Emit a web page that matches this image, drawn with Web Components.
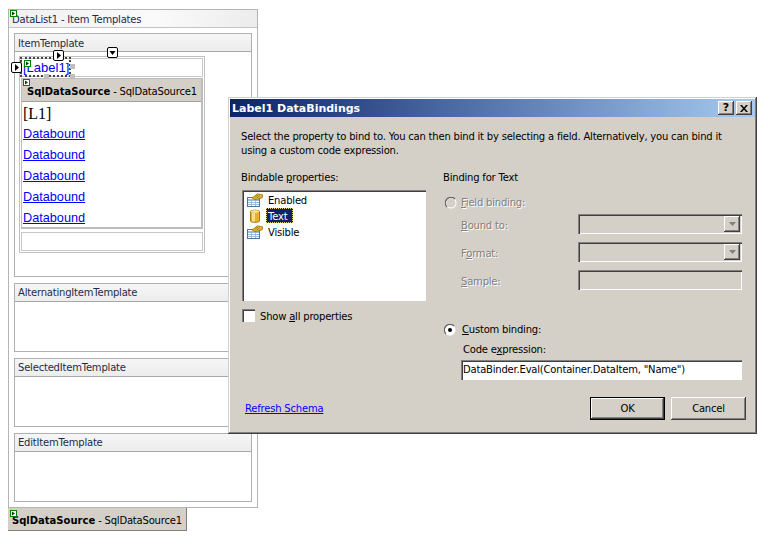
<!DOCTYPE html>
<html>
<head>
<meta charset="utf-8">
<title>Label1 DataBindings</title>
<style>
  html, body { margin: 0; background: #fff; }
  body {
    width: 783px;
    height: 555px;
    overflow: hidden;
    position: relative;
    --ui-font: "DejaVu Sans", sans-serif;
    font: 10px/14px var(--ui-font);
    letter-spacing: -.2px;
  }
  u { text-decoration: underline; }
</style>
</head>
<body>
<designer-frame label="DataList1 - Item Templates">
  <template-panel label="ItemTemplate" size="244" style="--head-line:20px">
    <item-table></item-table>
    <smart-tag dir="right" style="left:38px;top:16px"></smart-tag>
    <smart-tag dir="down" style="left:92px;top:13px"></smart-tag>
    <smart-tag dir="right" style="left:-4px;top:28px"></smart-tag>
  </template-panel>
  <template-panel label="AlternatingItemTemplate" size="69"></template-panel>
  <template-panel label="SelectedItemTemplate" size="69"></template-panel>
  <template-panel label="EditItemTemplate" size="69"></template-panel>
</designer-frame>
<source-tag></source-tag>

<bindings-dialog label="Label1 DataBindings"></bindings-dialog>

<script>
/**
 * Small glyph shown at the corner of designer controls
 */
class GreenTag extends HTMLElement {
  constructor() {
    super();
    const shadowRoot = this.attachShadow({ mode: 'open' });
    shadowRoot.innerHTML = `
      <style>
        :host { display: block; position: absolute; width: 7px; height: 7px; line-height: 0; }
      </style>
      <svg width="7" height="7" viewBox="0 0 7 7">
        <rect x=".5" y=".5" width="6" height="6" fill="#fff" stroke="#008000"/>
        <path d="M2 1.500v4l3-2z" fill="#004000"/>
      </svg>
    `;
  }
}

/**
 * Black outlined arrow button over the design surface
 */
class SmartTag extends HTMLElement {
  constructor() {
    super();
    const shadowRoot = this.attachShadow({ mode: 'open' });
    const arrow = this.getAttribute('dir') === 'down' ? 'M2.500 4h6l-3 4z' : 'M4 2v7l4-3.500z';
    shadowRoot.innerHTML = `
      <style>
        :host { display: block; position: absolute; width: 11px; height: 11px; line-height: 0; z-index: 3; }
      </style>
      <svg width="11" height="11" viewBox="0 0 11 11">
        <rect x=".5" y=".5" width="10" height="10" rx="1.500" fill="#fff" stroke="#000"/>
        <path d="${arrow}" fill="#000"/>
      </svg>
    `;
  }
}

/**
 * Outer designer box with the title strip
 */
class DesignerFrame extends HTMLElement {
  constructor() {
    super();
    const shadowRoot = this.attachShadow({ mode: 'open' });
    shadowRoot.innerHTML = `
      <style>
        :host {
          display: block;
          position: relative;
          box-sizing: border-box;
          width: 250px;
          height: 499px;
          margin: 9px 0 0 8px;
          border: 1px solid #b4b4b4;
          color: #1d2b4c;
        }
        .title {
          height: 17px;
          line-height: 20px;
          padding-left: 3px;
          border-bottom: 1px solid #c4c4c4;
          background: linear-gradient(90deg, #f0f0f0, #fafafa 60%, #ececec);
        }
        .body { display: flex; flex-direction: column; gap: 6px; padding: 5px 5px 0; }
        green-tag { left: 1px; top: 0; }
      </style>
      <green-tag></green-tag>
      <div class="title">${this.getAttribute('label')}</div>
      <div class="body"><slot></slot></div>
    `;
  }
}

/**
 * One template section of the DataList designer
 */
class TemplatePanel extends HTMLElement {
  constructor() {
    super();
    const shadowRoot = this.attachShadow({ mode: 'open' });
    shadowRoot.innerHTML = `
      <style>
        :host {
          display: block;
          position: relative;
          box-sizing: border-box;
          height: ${this.getAttribute('size')}px;
          border: 1px solid #b0b0b0;
          background: #fff;
        }
        .head {
          height: 17px;
          line-height: var(--head-line, 18px);
          padding-left: 3px;
          border-bottom: 1px solid #a8a8a8;
          background: linear-gradient(180deg, #f6f6f6, #ececec);
        }
        .content { padding: 4px 4px 0; }
      </style>
      <div class="head">${this.getAttribute('label')}</div>
      <div class="content"><slot></slot></div>
    `;
  }
}

/**
 * Rendered item table: label row, data source with sample rows, empty row
 */
class ItemTable extends HTMLElement {
  constructor() {
    super();
    const shadowRoot = this.attachShadow({ mode: 'open' });
    const rows = ['Databound', 'Databound', 'Databound', 'Databound', 'Databound']
      .map(text => `<a>${text}</a>`).join('');
    shadowRoot.innerHTML = `
      <style>
        :host {
          display: flex;
          flex-direction: column;
          box-sizing: border-box;
          width: 186px;
          height: 197px;
          padding: 1px;
          border: 1px solid #c0c0c0;
          position: relative;
        }
        .cell { border: 1px solid #c8c8c8; }
        .label {
          height: 17px;
          font: 13px/18px "Liberation Sans", sans-serif;
          letter-spacing: 0;
          color: #0000ee;
          padding-left: 1px;
          position: relative;
        }
        .select {
          position: absolute;
          left: -2px;
          top: -2px;
          width: 47px;
          height: 16px;
          border: 2px dotted #444;
        }
        .grip { position: absolute; width: 5px; height: 5px; background: #c0c0c0; }
        .source {
          margin-top: 1px;
          height: 148px;
          border: 1px solid #bcbcbc;
          border-width: 1px 2px 2px 1px;
          position: relative;
        }
        .source-head {
          height: 22px;
          line-height: 26px;
          padding-left: 5px;
          background: #d4d0c8;
          border-bottom: 1px solid #a0a0a0;
          color: #000;
          white-space: nowrap;
        }
        .source-head b { letter-spacing: 0; }
        .l1 { height: 21px; font: 16px/21px "Liberation Serif", serif; letter-spacing: 0; color: #000; padding: 0 1px; margin-top: 1px; }
        a {
          display: block;
          width: max-content;
          margin-left: 1px;
          height: 21px;
          font: 12.700px/21px "Liberation Sans", sans-serif;
          letter-spacing: 0;
          color: #0000ff;
          text-decoration: underline;
        }
        .empty { margin-top: 3px; height: 19px; }
      </style>
      <div class="cell label">[Label1]
        <div class="select"></div>
        <div class="grip" style="left:48px;top:5px"></div>
        <div class="grip" style="left:22px;top:15px"></div>
        <div class="grip" style="left:48px;top:15px"></div>
        <green-tag style="left:2px;top:1px"></green-tag>
      </div>
      <div class="source">
        <green-tag style="left:1px;top:0"></green-tag>
        <div class="source-head"><b>SqlDataSource</b> - SqlDataSource1</div>
        <div class="l1">[L1]</div>
        ${rows}
      </div>
      <div class="cell empty"></div>
    `;
  }
}

/**
 * Grey non visual control strip below the designer
 */
class SourceTag extends HTMLElement {
  constructor() {
    super();
    const shadowRoot = this.attachShadow({ mode: 'open' });
    shadowRoot.innerHTML = `
      <style>
        :host {
          display: block;
          position: relative;
          box-sizing: border-box;
          width: 179px;
          height: 23px;
          margin-left: 8px;
          padding-left: 4px;
          line-height: 26px;
          white-space: nowrap;
          background: #d4d0c8;
          border-right: 1px solid #808080;
          border-bottom: 1px solid #808080;
          color: #000;
        }
        b { letter-spacing: 0; }
        green-tag { left: 2px; top: 2px; }
      </style>
      <green-tag></green-tag>
      <b>SqlDataSource</b> - SqlDataSource1
    `;
  }
}

/**
 * Classic raised push button
 */
class PushButton extends HTMLElement {
  constructor() {
    super();
    const shadowRoot = this.attachShadow({ mode: 'open' });
    shadowRoot.innerHTML = `
      <style>
        :host {
          display: flex;
          align-items: center;
          justify-content: center;
          box-sizing: border-box;
          width: 75px;
          height: 23px;
          background: #d4d0c8;
          box-shadow: inset -1px -1px 0 #404040, inset 1px 1px 0 #fff, inset -2px -2px 0 #808080;
        }
        :host([default]) {
          outline: 1px solid #000;
          outline-offset: -1px;
          box-shadow: inset -2px -2px 0 #404040, inset 2px 2px 0 #fff, inset -3px -3px 0 #808080;
        }
      </style>
      <slot></slot>
    `;
  }
}

/**
 * Sunken field, optionally with a drop arrow; disabled ones stay grey
 */
class SunkenField extends HTMLElement {
  constructor() {
    super();
    const shadowRoot = this.attachShadow({ mode: 'open' });
    const drop = this.hasAttribute('drop')
      ? `<div class="drop"><svg width="7" height="4" viewBox="0 0 7 4"><path d="M0 0h7L3.500 4z" fill="#808080"/></svg></div>`
      : '';
    shadowRoot.innerHTML = `
      <style>
        :host {
          display: flex;
          align-items: center;
          justify-content: flex-end;
          box-sizing: border-box;
          height: 20px;
          padding: 2px;
          background: #d4d0c8;
          box-shadow: inset 1px 1px 0 #808080, inset 2px 2px 0 #404040, inset -1px -1px 0 #fff;
        }
        .drop {
          display: flex;
          align-items: center;
          justify-content: center;
          width: 16px;
          height: 16px;
          background: #d4d0c8;
          box-shadow: inset -1px -1px 0 #404040, inset 1px 1px 0 #fff, inset -2px -2px 0 #808080;
        }
      </style>
      ${drop}<slot></slot>
    `;
  }
}

/**
 * Round option mark
 */
class RadioMark extends HTMLElement {
  constructor() {
    super();
    const shadowRoot = this.attachShadow({ mode: 'open' });
    const checked = this.hasAttribute('checked');
    shadowRoot.innerHTML = `
      <style>
        :host { display: block; width: 12px; height: 12px; line-height: 0; flex: none; }
      </style>
      <svg width="12" height="12" viewBox="0 0 12 12">
        <circle cx="6" cy="6" r="5.500" fill="#fff"/>
        <circle cx="6" cy="6" r="4.500" fill="${checked ? '#fff' : '#d4d0c8'}"/>
        <path d="M10 2A5.500 5.500 0 0 0 2 10" fill="none" stroke="#606060" stroke-width="1.200"/>
        ${checked ? '<circle cx="6" cy="6" r="2" fill="#000"/>' : ''}
      </svg>
    `;
  }
}

/**
 * Row of the bindable properties list with its icon
 */
class PropertyRow extends HTMLElement {
  constructor() {
    super();
    const shadowRoot = this.attachShadow({ mode: 'open' });
    const icon = this.getAttribute('icon') === 'bound'
      ? `<svg width="16" height="16" viewBox="0 0 16 16">
           <path d="M3.500 2.500C3.500 .8 12.500 .8 12.500 2.500V12C12.500 13.800 3.500 13.800 3.500 12z" fill="#e8b030" stroke="#a87c18"/>
           <ellipse cx="8" cy="2.500" rx="4" ry="1.200" fill="#f8e8a0"/>
           <rect x="5" y="4" width="3" height="8.500" fill="#f8dc80"/>
         </svg>`
      : `<svg width="16" height="16" viewBox="0 0 16 16">
           <rect x=".5" y="4.500" width="12" height="9" fill="#fff" stroke="#4c74a8"/>
           <path d="M1 7h11" stroke="#4c74a8"/>
           <path d="M1 9.500h11M1 11.500h11M4.500 7v6M8.500 7v6" stroke="#a0b8d8"/>
           <path d="M5 5L10.500 .8 16 2l-1 3-4 1-3 .5z" fill="#e8b830" stroke="#806418" stroke-width=".7"/>
           <path d="M8 4.500L11 2M10 5l3-2.500" stroke="#806418" stroke-width=".7"/>
         </svg>`;
    shadowRoot.innerHTML = `
      <style>
        :host { display: flex; align-items: flex-start; height: 16px; gap: 3px; color: #000; }
        .icon { width: 16px; height: 16px; line-height: 0; flex: none; }
        .text { margin-top: -1px; padding: 0 6px 0 2px; line-height: 17px; height: 15px; }
        :host([selected]) .text { background: #0a246a; color: #fff; outline: 1px dotted #e8d080; outline-offset: -1px; }
      </style>
      <div class="icon">${icon}</div>
      <div class="text"><slot></slot></div>
    `;
  }
}

/**
 * The DataBindings window floating over the designer
 */
class BindingsDialog extends HTMLElement {
  constructor() {
    super();
    const shadowRoot = this.attachShadow({ mode: 'open' });
    shadowRoot.innerHTML = `
      <style>
        :host {
          display: block;
          position: absolute;
          left: 228px;
          top: 97px;
          width: 529px;
          height: 337px;
          box-sizing: border-box;
          padding: 2px;
          background: #d4d0c8;
          box-shadow: inset -1px -1px 0 #404040, inset 1px 1px 0 #d4d0c8, inset -2px -2px 0 #808080, inset 2px 2px 0 #fff;
          color: #000;
          z-index: 5;
        }
        .titlebar {
          display: flex;
          align-items: center;
          justify-content: space-between;
          height: 18px;
          padding: 0 3px 0 2px;
          background: linear-gradient(90deg, #0a246a, #a6caf0);
          color: #fff;
          font-weight: bold;
          font-size: 11px;
          letter-spacing: 0;
        }
        .titlebar > span { padding-top: 2px; }
        .caps { display: flex; gap: 2px; }
        .cap {
          width: 16px;
          height: 14px;
          display: flex;
          align-items: center;
          justify-content: center;
          background: #d4d0c8;
          box-shadow: inset -1px -1px 0 #404040, inset 1px 1px 0 #fff, inset -2px -2px 0 #808080;
          color: #000;
          line-height: 14px;
        }
        .cap svg { display: block; }
        .main { padding: 13px 9px 0 11px; }
        .intro { width: 490px; white-space: nowrap; }
        .columns { display: grid; grid-template-columns: 202px 299px; margin-top: 13px; }
        .list {
          box-sizing: border-box;
          width: 184px;
          height: 111px;
          margin: 5px 0 0 1px;
          padding: 3px 2px 0 5px;
          background: #fff;
          box-shadow: inset 1px 1px 0 #808080, inset 2px 2px 0 #404040, inset -1px -1px 0 #fff;
        }
        .check { display: flex; align-items: flex-start; gap: 5px; margin: 8px 0 0 1px; }
        .check span { margin-top: 1px; }
        .box {
          width: 13px;
          height: 13px;
          background: #fff;
          box-shadow: inset 1px 1px 0 #808080, inset 2px 2px 0 #404040, inset -1px -1px 0 #fff;
        }
        .option { display: flex; align-items: center; gap: 4px; height: 14px; padding-left: 2px; }
        .option.custom { gap: 6px; margin-top: 33px; padding-left: 1px; }
        .off { color: #808080; text-shadow: 1px 1px 0 #fff; }
        .fields {
          display: grid;
          grid-template-columns: 117px 164px;
          row-gap: 8px;
          align-items: center;
          margin: 4px 0 0 18px;
        }
        .fields span { padding-top: 4px; }
        .code-label { margin: 6px 0 3px 20px; }
        .code {
          box-sizing: border-box;
          width: 281px;
          height: 20px;
          margin-left: 18px;
          padding: 0 2px;
          line-height: 20px;
          background: #fff;
          white-space: nowrap;
          box-shadow: inset 1px 1px 0 #808080, inset 2px 2px 0 #404040, inset -1px -1px 0 #fff;
        }
        .actions { display: flex; align-items: center; margin-top: 17px; }
        .actions a { color: #0000ff; text-decoration: underline; margin-left: 4px; }
        .actions push-button:first-of-type { margin-left: auto; }
        .actions push-button + push-button { margin-left: 6px; }
      </style>
      <div class="titlebar">
        <span>${this.getAttribute('label')}</span>
        <div class="caps">
          <div class="cap"><b>?</b></div>
          <div class="cap"><svg width="8" height="7" viewBox="0 0 8 7"><path d="M0 0h2l2 2.500L6 0h2L5 3.500 8 7H6L4 4.500 2 7H0l3-3.500z" fill="#000"/></svg></div>
        </div>
      </div>
      <div class="main">
        <div class="intro">Select the property to bind to. You can then bind it by selecting a field. Alternatively, you can bind it<br>using a custom code expression.</div>
        <div class="columns">
          <div>
            <div>Bindable <u>p</u>roperties:</div>
            <div class="list">
              <property-row icon="prop">Enabled</property-row>
              <property-row icon="bound" selected>Text</property-row>
              <property-row icon="prop">Visible</property-row>
            </div>
            <div class="check"><div class="box"></div><span>Show <u>a</u>ll properties</span></div>
          </div>
          <div>
            <div>Binding for Text</div>
            <div class="option off" style="margin-top:11px"><radio-mark></radio-mark><span><u>F</u>ield binding:</span></div>
            <div class="fields off">
              <span><u>B</u>ound to:</span><sunken-field drop></sunken-field>
              <span>F<u>o</u>rmat:</span><sunken-field drop></sunken-field>
              <span><u>S</u>ample:</span><sunken-field></sunken-field>
            </div>
            <div class="option custom"><radio-mark checked></radio-mark><span><u>C</u>ustom binding:</span></div>
            <div class="code-label">Code e<u>x</u>pression:</div>
            <div class="code">DataBinder.Eval(Container.DataItem, "Name")</div>
          </div>
        </div>
        <div class="actions">
          <a>Refresh Schema</a>
          <push-button default>OK</push-button>
          <push-button>Cancel</push-button>
        </div>
      </div>
    `;
  }
}

// Register custom elements
customElements.define('green-tag', GreenTag);
customElements.define('smart-tag', SmartTag);
customElements.define('designer-frame', DesignerFrame);
customElements.define('template-panel', TemplatePanel);
customElements.define('item-table', ItemTable);
customElements.define('source-tag', SourceTag);
customElements.define('push-button', PushButton);
customElements.define('sunken-field', SunkenField);
customElements.define('radio-mark', RadioMark);
customElements.define('property-row', PropertyRow);
customElements.define('bindings-dialog', BindingsDialog);
</script>
</body>
</html>
